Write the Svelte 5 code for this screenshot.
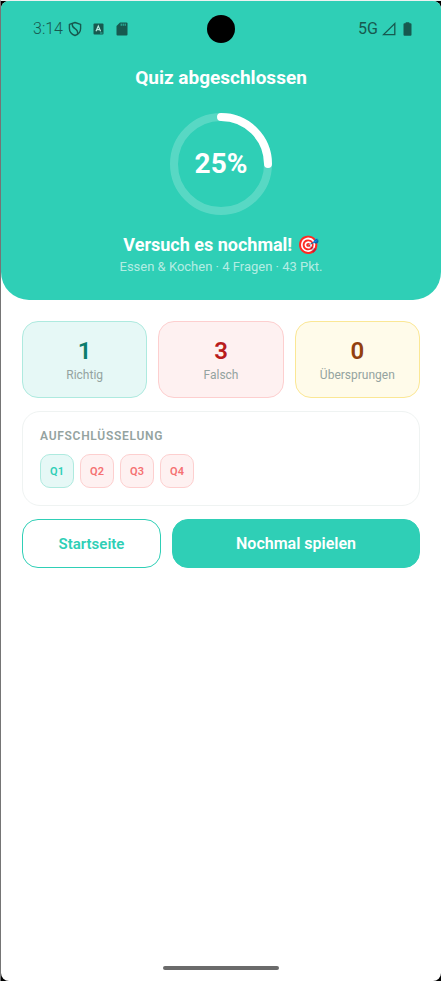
<script>
  const percent = 25;
  const radius = 47;
  const circumference = 2 * Math.PI * radius;

  const stats = [
    { value: 1, label: 'Richtig', tone: 'right' },
    { value: 3, label: 'Falsch', tone: 'wrong' },
    { value: 0, label: 'Übersprungen', tone: 'skipped' }
  ];

  const questions = [
    { name: 'Q1', tone: 'right' },
    { name: 'Q2', tone: 'wrong' },
    { name: 'Q3', tone: 'wrong' },
    { name: 'Q4', tone: 'wrong' }
  ];
</script>

<div class="device">
  <div class="screen">
    <header class="hero">
      <div class="status">
        <div class="status-left">
          <span class="clock">3:14</span>
          <svg class="shield" width="14" height="16" viewBox="0 0 14 16" fill="none" stroke="currentColor" stroke-width="1.4" stroke-linejoin="round" aria-hidden="true">
            <path d="M7 1.5 12.600 3.300v4.100c0 3.200-2.200 5.800-5.600 7.100C3.600 13.200 1.400 10.600 1.400 7.400V3.300Z" />
            <path d="M4.300 2.800C4 5.200 4.700 6.300 7 7.600c2.200 1.300 3 2.600 2.500 5.200" />
          </svg>
          <svg class="letter" width="11" height="12" viewBox="0 0 11 12" aria-hidden="true">
            <rect x="0.5" y="0.5" width="10" height="11" rx="1" fill="currentColor" />
            <path d="M3 8.200 5.300 3l2.300 5.200M3.800 6.600h3" fill="none" stroke="#b5e9df" stroke-width="1.2" />
            <path d="M7 10h2.500" stroke="#2fcfb6" stroke-width="0.8" />
          </svg>
          <svg class="sdcard" width="12" height="14" viewBox="0 0 12 14" aria-hidden="true">
            <path d="M4 .5h6.500a1 1 0 0 1 1 1v11a1 1 0 0 1-1 1h-9a1 1 0 0 1-1-1V4Z" fill="currentColor" />
            <path d="M5.200 1.600v2.200M7.200 1.600v2.200M9.200 1.600v2.200" stroke="#2fcfb6" stroke-width="0.9" />
          </svg>
        </div>
        <div class="camera"></div>
        <div class="status-right">
          <span class="network">5G</span>
          <svg class="signal" width="14" height="14" viewBox="0 0 14 14" fill="none" stroke="currentColor" stroke-width="1.3" aria-hidden="true">
            <path d="M12.800 1.600v11H1.500Z" />
          </svg>
          <svg class="battery" width="9" height="14" viewBox="0 0 9 14" aria-hidden="true">
            <path d="M2.500 1.300V.9a.6.6 0 0 1 .6-.6h2.800a.6.6 0 0 1 .6.6v.4h1a1 1 0 0 1 1 1v10.400a1 1 0 0 1-1 1h-6a1 1 0 0 1-1-1V2.300a1 1 0 0 1 1-1Z" fill="currentColor" />
          </svg>
        </div>
      </div>

      <h1>Quiz abgeschlossen</h1>

      <div class="ring">
        <svg viewBox="0 0 102 102" width="102" height="102" fill="none" stroke="#fff" stroke-width="8" aria-hidden="true">
          <circle cx="51" cy="51" r={radius} stroke-opacity="0.2" />
          <circle
            cx="51"
            cy="51"
            r={radius}
            stroke-linecap="round"
            stroke-dasharray="{(circumference * percent) / 100} {circumference}"
            transform="rotate(-90 51 51)"
          />
        </svg>
        <span class="percent">{percent}%</span>
      </div>

      <h2>Versuch es nochmal! 🎯</h2>
      <p class="meta">Essen &amp; Kochen · 4 Fragen · 43 Pkt.</p>
    </header>

    <main>
      <div class="stats">
        {#each stats as stat}
          <div class="stat {stat.tone}">
            <strong>{stat.value}</strong>
            <span>{stat.label}</span>
          </div>
        {/each}
      </div>

      <section class="breakdown">
        <h3>AUFSCHLÜSSELUNG</h3>
        <div class="chips">
          {#each questions as question}
            <span class="chip {question.tone}">{question.name}</span>
          {/each}
        </div>
      </section>

      <div class="actions">
        <button type="button" class="home">Startseite</button>
        <button type="button" class="again">Nochmal spielen</button>
      </div>
    </main>

    <div class="gesture"></div>
  </div>
</div>

<style>
  :global(body) {
    margin: 0;
    background: #000;
  }

  .device {
    box-sizing: border-box;
    min-height: 100vh;
    display: flex;
    border-left: 1px solid #757575;
    border-top: 1px solid #eef2f1;
    font-family: Roboto, 'Liberation Sans', sans-serif;
  }

  .screen {
    flex: 1;
    min-width: 0;
    display: flex;
    flex-direction: column;
    background: #fff;
    border-radius: 8px;
    overflow: hidden;
  }

  .hero {
    display: flex;
    flex-direction: column;
    align-items: center;
    padding-bottom: 24px;
    background: #2fcfb6;
    border-radius: 0 0 28px 28px;
    color: #fff;
    text-align: center;
  }

  .status {
    align-self: stretch;
    display: grid;
    grid-template-columns: 1fr auto 1fr;
    align-items: center;
    height: 55px;
    padding: 0 29px;
    color: #17594f;
  }

  .status-left,
  .status-right {
    display: flex;
    align-items: center;
  }

  .status-left {
    padding-left: 3px;
  }

  .status-right {
    justify-content: flex-end;
  }

  .clock,
  .network {
    font-size: 16px;
    line-height: 20px;
  }

  .clock {
    font-weight: 300;
  }

  .shield {
    margin-left: 5px;
  }

  .letter {
    margin-left: 11px;
  }

  .sdcard {
    margin-left: 12px;
  }

  .signal {
    margin-left: 4px;
  }

  .battery {
    margin-left: 7px;
  }

  .camera {
    width: 28px;
    height: 28px;
    border-radius: 50%;
    background: #000;
  }

  h1,
  h2,
  h3,
  p {
    margin: 0;
  }

  h1 {
    margin-top: 10px;
    font-size: 19px;
    line-height: 24px;
    font-weight: 700;
  }

  .ring {
    display: grid;
    place-items: center;
    margin-top: 23px;
  }

  .ring > * {
    grid-area: 1 / 1;
  }

  .ring svg {
    display: block;
  }

  .percent {
    font-size: 28px;
    line-height: 36px;
    font-weight: 700;
  }

  h2 {
    margin-top: 18px;
    font-size: 18px;
    line-height: 24px;
    font-weight: 700;
  }

  .meta {
    margin-top: 1px;
    font-size: 13px;
    line-height: 18px;
    color: rgba(255, 255, 255, 0.65);
  }

  main {
    display: flex;
    flex-direction: column;
    gap: 13px;
    padding: 21px 21px 0;
  }

  .stats {
    display: grid;
    grid-template-columns: repeat(3, 1fr);
    gap: 11px;
  }

  .stat {
    display: flex;
    flex-direction: column;
    align-items: center;
    padding: 15px 0 13px;
    border: 1px solid;
    border-radius: 16px;
  }

  .stat strong {
    font-size: 24px;
    line-height: 28px;
    font-weight: 600;
  }

  .stat span {
    margin-top: 1px;
    font-size: 12px;
    line-height: 18px;
    color: #94a3a0;
  }

  .breakdown {
    padding: 15px 17px 17px;
    border: 1px solid #eff3f2;
    border-radius: 18px;
  }

  h3 {
    font-size: 12px;
    line-height: 18px;
    font-weight: 600;
    letter-spacing: 0.06em;
    color: #94a3a0;
  }

  .chips {
    display: flex;
    flex-wrap: wrap;
    gap: 6px;
    margin-top: 9px;
  }

  .chip {
    box-sizing: border-box;
    display: grid;
    place-items: center;
    width: 34px;
    height: 34px;
    border: 1px solid;
    border-radius: 10px;
    font-size: 11px;
    font-weight: 600;
  }

  .right {
    background: #e6f8f6;
    border-color: #aeeadf;
  }

  .wrong {
    background: #fef1f1;
    border-color: #fdcfcf;
  }

  .skipped {
    background: #fffbea;
    border-color: #fbe795;
  }

  .stat.right strong {
    color: #0c7d6d;
  }

  .stat.wrong strong {
    color: #b91c1c;
  }

  .stat.skipped strong {
    color: #92400e;
  }

  .chip.right {
    border-color: #aeeadf;
    color: #2fcfb6;
  }

  .chip.wrong {
    border-color: #fdcfcf;
    color: #f57272;
  }

  .actions {
    display: grid;
    grid-template-columns: 139fr 248fr;
    gap: 11px;
  }

  button {
    box-sizing: border-box;
    height: 49px;
    padding: 0;
    border: 1px solid #2fcfb6;
    border-radius: 16px;
    font-family: inherit;
    font-weight: 600;
    cursor: pointer;
  }

  .home {
    background: #fff;
    font-size: 15px;
    color: #2fcfb6;
  }

  .again {
    background: #2fcfb6;
    font-size: 16px;
    color: #fff;
  }

  .gesture {
    width: 116px;
    height: 4px;
    margin: auto auto 11px;
    border-radius: 2px;
    background: #6b6b6b;
  }
</style>
